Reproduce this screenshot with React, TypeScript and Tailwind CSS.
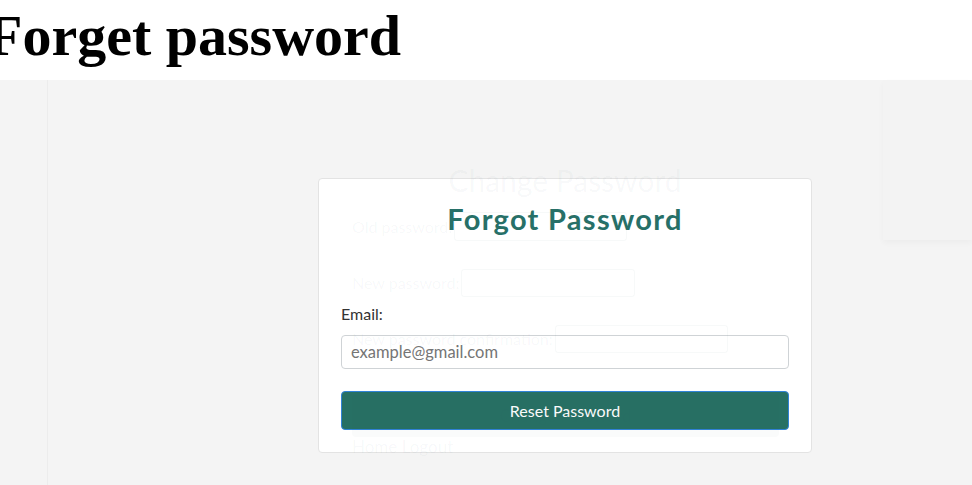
import React from "react";

const ghostText = "text-[rgba(60,90,100,0.045)]";
const ghostBorder = "border-[rgba(60,90,100,0.04)]";

export default function App() {
  return (
    <div className="flex min-h-[485px] w-[972px] flex-col bg-white" style={{ fontFamily: "Lato, 'Open Sans', sans-serif" }}>
      <div className="h-[80px] overflow-hidden bg-white">
        <h1
          className="ml-[-13px] mt-[2px] whitespace-nowrap text-[58px] font-bold leading-[68px] text-black"
          style={{ fontFamily: "'Liberation Serif', 'Times New Roman', serif" }}
        >
          Forget password
        </h1>
      </div>
      <div className="flex flex-1 bg-[#f4f4f4]">
        <div className="w-[48px] border-r border-[#ececec]" />
        <div className="flex-1 pt-[98px]">
          <div className="relative ml-[270px] w-[494px]">
            <div className="rounded-[4px] border border-[#e3e3e3] bg-white px-[22px] pb-[22px] pt-[25px]">
              <h2 className="text-center text-[29px] font-bold leading-none tracking-[1.3px] text-[#277068]">Forgot Password</h2>
              <label className="mt-[73px] block text-[16px] leading-none text-[#333]">Email:</label>
              <input
                className="mt-[13px] block h-[34px] w-full rounded-[4px] border border-[#cfd3d6] bg-white px-[9px] text-[16.5px] text-[#333] placeholder:text-[#757575] outline-none"
                placeholder="example@gmail.com"
              />
              <button className="mt-[22px] block h-[39px] w-full rounded-[4px] border border-[#3183d8] bg-[#277064] text-[16px] text-white">
                Reset Password
              </button>
            </div>
            <div className={`pointer-events-none absolute left-0 top-[-13px] w-full ${ghostText}`}>
              <div className="text-center text-[30px] leading-none">Change Password</div>
              <div className="ml-[34px] mt-[17px] flex w-[427px] flex-col text-[16px]">
                <div className="flex h-[29px] items-center">
                  <span>Old password:</span>
                  <span className={`ml-[2px] h-[29px] w-[173px] rounded-[3px] border ${ghostBorder}`} />
                </div>
                <div className="mt-[28px] flex h-[28px] items-center">
                  <span>New password:</span>
                  <span className={`ml-[2px] h-[28px] w-[174px] rounded-[3px] border ${ghostBorder}`} />
                </div>
                <div className="mt-[28px] flex h-[28px] items-center">
                  <span>New password confirmation:</span>
                  <span className={`ml-[2px] h-[28px] w-[173px] rounded-[3px] border ${ghostBorder}`} />
                </div>
                <div className="mt-[42px] flex h-[42px] items-center justify-center rounded-[4px] bg-[rgba(60,90,100,0.025)] text-[17px]">
                  Change Password
                </div>
                <div className="mt-[1px] text-[17px] leading-none">Home Logout</div>
              </div>
            </div>
          </div>
        </div>
        <div className="w-[89px]">
          <div className="h-[160px] bg-[#f3f3f3] shadow-[0_3px_6px_rgba(0,0,0,0.03)]" />
        </div>
      </div>
    </div>
  );
}
